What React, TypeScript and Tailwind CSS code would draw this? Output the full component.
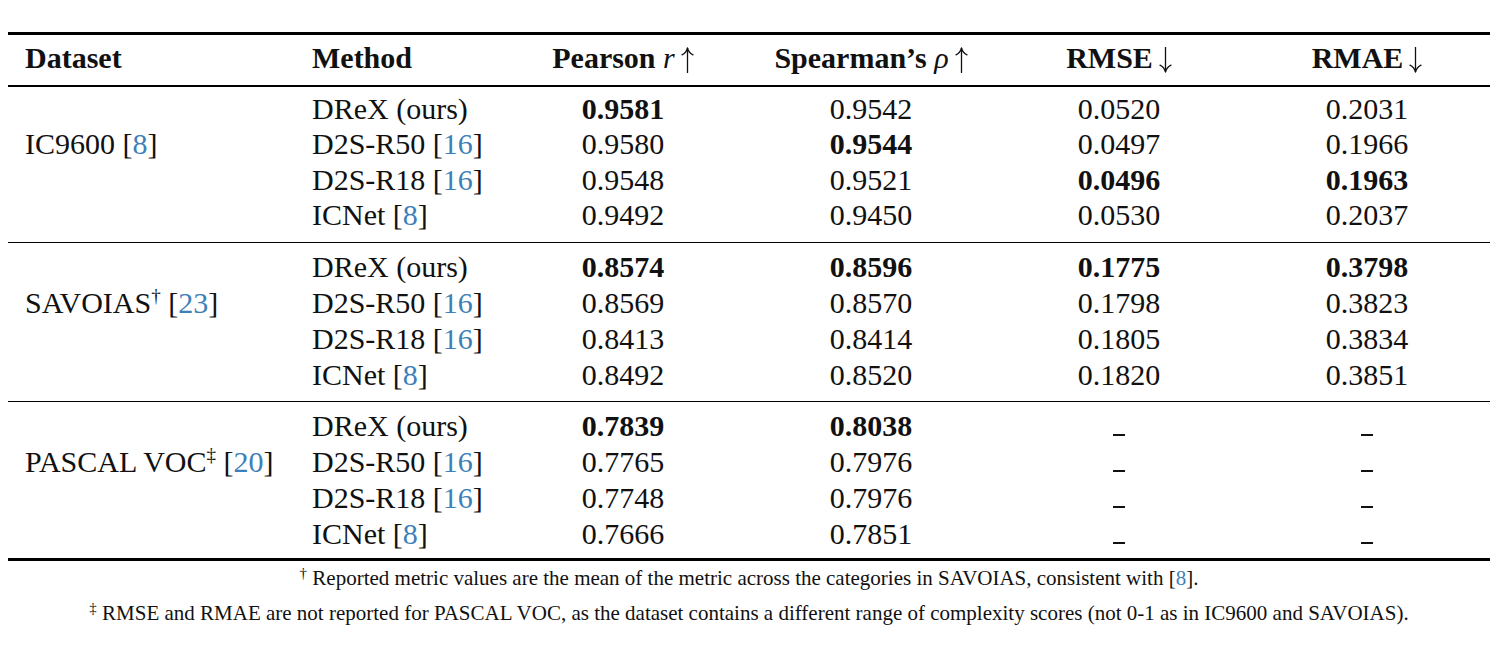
import React from 'react';

type Cell = { v: string; bold?: boolean };
type Row = { method: string; cite?: string; vals: (Cell | null)[] };
type Group = { name: string; mark?: string; cite: string; rows: Row[] };

const groups: Group[] = [
  {
    name: 'IC9600',
    cite: '8',
    rows: [
      { method: 'DReX (ours)', vals: [{ v: '0.9581', bold: true }, { v: '0.9542' }, { v: '0.0520' }, { v: '0.2031' }] },
      { method: 'D2S-R50', cite: '16', vals: [{ v: '0.9580' }, { v: '0.9544', bold: true }, { v: '0.0497' }, { v: '0.1966' }] },
      { method: 'D2S-R18', cite: '16', vals: [{ v: '0.9548' }, { v: '0.9521' }, { v: '0.0496', bold: true }, { v: '0.1963', bold: true }] },
      { method: 'ICNet', cite: '8', vals: [{ v: '0.9492' }, { v: '0.9450' }, { v: '0.0530' }, { v: '0.2037' }] },
    ],
  },
  {
    name: 'SAVOIAS',
    mark: '†',
    cite: '23',
    rows: [
      { method: 'DReX (ours)', vals: [{ v: '0.8574', bold: true }, { v: '0.8596', bold: true }, { v: '0.1775', bold: true }, { v: '0.3798', bold: true }] },
      { method: 'D2S-R50', cite: '16', vals: [{ v: '0.8569' }, { v: '0.8570' }, { v: '0.1798' }, { v: '0.3823' }] },
      { method: 'D2S-R18', cite: '16', vals: [{ v: '0.8413' }, { v: '0.8414' }, { v: '0.1805' }, { v: '0.3834' }] },
      { method: 'ICNet', cite: '8', vals: [{ v: '0.8492' }, { v: '0.8520' }, { v: '0.1820' }, { v: '0.3851' }] },
    ],
  },
  {
    name: 'PASCAL VOC',
    mark: '‡',
    cite: '20',
    rows: [
      { method: 'DReX (ours)', vals: [{ v: '0.7839', bold: true }, { v: '0.8038', bold: true }, null, null] },
      { method: 'D2S-R50', cite: '16', vals: [{ v: '0.7765' }, { v: '0.7976' }, null, null] },
      { method: 'D2S-R18', cite: '16', vals: [{ v: '0.7748' }, { v: '0.7976' }, null, null] },
      { method: 'ICNet', cite: '8', vals: [{ v: '0.7666' }, { v: '0.7851' }, null, null] },
    ],
  },
];

const serif = '"Liberation Serif", "Times New Roman", serif';
const cols = 'grid grid-cols-[287px_204px_248px_248px_248px_248px] items-center';

function Cite({ n }: { n: string }) {
  return (
    <span>
      [<span className="text-[#3d7fb8]">{n}</span>]
    </span>
  );
}

function Dash() {
  return <span className="inline-block w-[12px] h-[2.5px] bg-[#111]" />;
}

// thin math-style arrow, as in the typeset table
function Arrow({ down }: { down?: boolean }) {
  return (
    <svg
      width="13"
      height="26"
      viewBox="0 0 13 26"
      className={`inline-block align-[-5px] ml-[6px] ${down ? 'rotate-180' : ''}`}
      fill="none"
      stroke="#111"
      strokeWidth="1.3"
      strokeLinecap="round"
    >
      <path d="M6.5 25.5V1.5" />
      <path d="M6.5 1.2C5.6 4.2 3.6 6.6 1 7.8" />
      <path d="M6.5 1.2C7.4 4.2 9.4 6.6 12 7.8" />
    </svg>
  );
}

export default function App() {
  return (
    <div className="w-[1493px] h-[658px] bg-white text-[#111] pt-[32px] pl-[8px]" style={{ fontFamily: serif }}>
      <div className="w-[1482px] text-[30px]">
        <div className="h-[3px] bg-black" />

        {/* Header */}
        <div className={`${cols} h-[36px] leading-[36px] mt-[5px] mb-[9px] font-bold whitespace-nowrap`}>
          <div className="pl-[17px]">Dataset</div>
          <div className="pl-[17px]">Method</div>
          <div className="text-center">
            Pearson <span className="italic font-normal">r</span>
            <Arrow />
          </div>
          <div className="text-center">
            Spearman’s <span className="italic font-normal">ρ</span>
            <Arrow />
          </div>
          <div className="text-center">
            RMSE
            <Arrow down />
          </div>
          <div className="text-center">
            RMAE
            <Arrow down />
          </div>
        </div>
        <div className="h-[1.5px] bg-black" />

        {groups.map((g, gi) => (
          <div key={g.name}>
            <div className={gi === 0 ? 'pt-[4px] pb-[9px]' : gi === 1 ? 'pt-[6px] pb-[7.5px]' : 'pt-[6px] pb-[6px]'}>
              {g.rows.map((r, ri) => (
                <div key={r.method} className={`${cols} ${gi === 0 ? 'h-[35.5px] leading-[35.5px]' : 'h-[36px] leading-[36px]'}`}>
                  <div className="pl-[17px] whitespace-nowrap">
                    {ri === 1 && (
                      <>
                        {g.name}
                        {g.mark && <sup className="text-[19px] top-[-0.6em]">{g.mark}</sup>} <Cite n={g.cite} />
                      </>
                    )}
                  </div>
                  <div className="pl-[17px] whitespace-nowrap">
                    {r.method}
                    {r.cite && (
                      <>
                        {' '}
                        <Cite n={r.cite} />
                      </>
                    )}
                  </div>
                  {r.vals.map((c, ci) => (
                    <div key={ci} className={`text-center ${c?.bold ? 'font-bold' : ''}`}>
                      {c ? c.v : <Dash />}
                    </div>
                  ))}
                </div>
              ))}
            </div>
            {gi < groups.length - 1 ? <div className="h-[1.5px] bg-black" /> : <div className="h-[3px] bg-black" />}
          </div>
        ))}

        {/* Footnotes */}
        <div className="text-[21px] leading-[35px] text-center whitespace-nowrap" style={{ fontFamily: serif }}>
          <p>
            <sup className="text-[15px]">†</sup> Reported metric values are the mean of the metric across the categories in SAVOIAS, consistent with <Cite n="8" />.
          </p>
          <p>
            <sup className="text-[15px]">‡</sup> RMSE and RMAE are not reported for PASCAL VOC, as the dataset contains a different range of complexity scores (not 0-1 as in IC9600 and SAVOIAS).
          </p>
        </div>
      </div>
    </div>
  );
}
